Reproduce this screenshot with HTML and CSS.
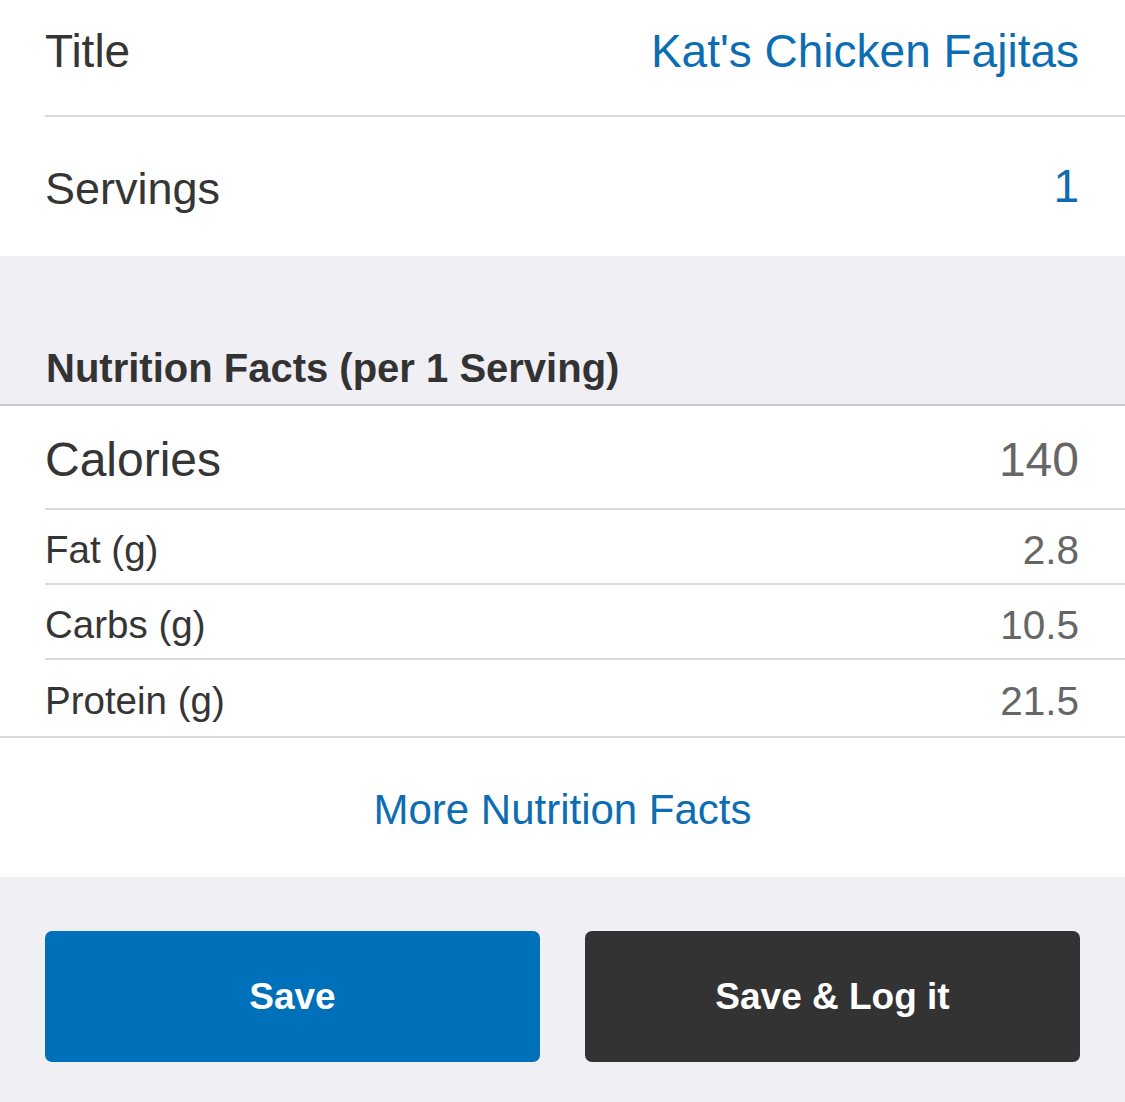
FILE: index.html
```html
<!DOCTYPE html>
<html>
<head>
<meta charset="utf-8">
<link rel="stylesheet" href="styles.css">
</head>
<body>
<div class="page">
  <section class="card">
    <div class="row row-title">
      <span class="label">Title</span>
      <span class="value-link">Kat's Chicken Fajitas</span>
    </div>
    <div class="row row-servings">
      <span class="label">Servings</span>
      <span class="value-link">1</span>
    </div>
  </section>

  <div class="section-header">
    <h2 class="section-title">Nutrition Facts (per 1 Serving)</h2>
  </div>

  <section class="card nutrition">
    <div class="nrow nrow-cal">
      <span class="nlabel">Calories</span>
      <span class="nvalue">140</span>
    </div>
    <div class="nrow">
      <span class="nlabel">Fat (g)</span>
      <span class="nvalue">2.8</span>
    </div>
    <div class="nrow">
      <span class="nlabel">Carbs (g)</span>
      <span class="nvalue">10.5</span>
    </div>
    <div class="nrow nrow-last">
      <span class="nlabel">Protein (g)</span>
      <span class="nvalue">21.5</span>
    </div>
  </section>

  <section class="card more">
    <span class="more-link">More Nutrition Facts</span>
  </section>

  <div class="actions">
    <button class="btn btn-primary">Save</button>
    <button class="btn btn-dark">Save &amp; Log it</button>
  </div>
</div>
</body>
</html>
```

FILE: styles.css
```css
html, body {
  margin: 0;
  padding: 0;
  background: #efeff4;
}

.page {
  width: 1125px;
  height: 1102px;
  overflow: hidden;
  font-family: "Liberation Sans", Arial, sans-serif;
  color: #333333;
  background: #efeff4;
}

.card {
  background: #ffffff;
}

.row {
  display: flex;
  align-items: center;
  justify-content: space-between;
  margin-left: 45px;
  padding-right: 46px;
  box-sizing: border-box;
}

.row-title {
  height: 117px;
  padding-bottom: 14px;
  border-bottom: 2px solid #dadada;
}

.row-servings {
  height: 139px;
  padding-top: 4px;
}

.label {
  font-size: 46px;
  color: #353535;
  line-height: 1;
}

.row-servings .label {
  font-size: 45px;
}

.value-link {
  font-size: 46px;
  color: #0d6db2;
  line-height: 1;
}

.row-servings .value-link {
  margin-bottom: 6px;
}

.section-header {
  height: 150px;
  box-sizing: border-box;
  display: flex;
  align-items: flex-end;
  padding: 0 0 16px 46px;
  border-bottom: 2px solid #c8c7cc;
}

.section-title {
  margin: 0;
  font-size: 40px;
  line-height: 40px;
  font-weight: bold;
  color: #333333;
}

.nutrition {
  border-bottom: 2px solid #dadada;
}

.nrow {
  display: flex;
  align-items: center;
  justify-content: space-between;
  margin-left: 45px;
  padding-right: 46px;
  height: 75px;
  box-sizing: border-box;
  border-bottom: 2px solid #dadada;
  padding-top: 7px;
}

.nrow-cal {
  height: 104px;
  padding-top: 6px;
}

.nrow-last {
  border-bottom: none;
  height: 76px;
}

.nlabel {
  font-size: 38.5px;
  line-height: 1;
  color: #353535;
}

.nvalue {
  font-size: 40.5px;
  line-height: 1;
  color: #666666;
}

.nrow-cal .nlabel,
.nrow-cal .nvalue {
  font-size: 48px;
}

.more {
  height: 139px;
  display: flex;
  align-items: center;
  justify-content: center;
}

.more-link {
  font-size: 42px;
  line-height: 1;
  color: #0d6db2;
  margin-top: 4px;
}

.actions {
  display: flex;
  gap: 45px;
  padding: 54px 45px 40px 45px;
  box-sizing: border-box;
  height: 225px;
  background: #efeff4;
}

.btn {
  flex: 1;
  height: 131px;
  border: none;
  border-radius: 7px;
  font-family: "Liberation Sans", Arial, sans-serif;
  font-size: 37px;
  font-weight: bold;
  color: #ffffff;
  padding: 0;
  cursor: pointer;
}

.btn-primary {
  background: #0070ba;
}

.btn-dark {
  background: #333333;
}
```
